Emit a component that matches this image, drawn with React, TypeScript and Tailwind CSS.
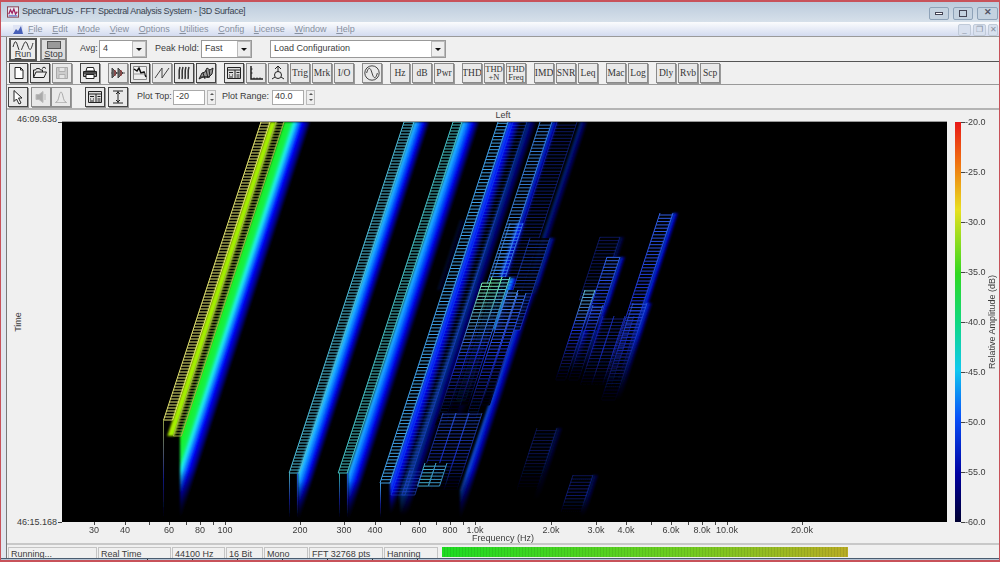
import React from "react";

// every chart coordinate below is in page pixels; the svg viewBox starts where the plot starts
const PLOT_TOP = 122;
const PLOT_BOTTOM = 522;

type Stop = [number, string];

const PALETTES: Record<string, Stop[]> = {
  hot: [
    [0, "#1ef01e"],
    [0.28, "#10f050"],
    [0.4, "#20f0f0"],
    [0.52, "#1090ff"],
    [0.68, "#0000ff"],
    [0.87, "#00007c"],
    [1, "#000000"],
  ],
  cyan: [
    [0, "#30d0ff"],
    [0.3, "#0878ff"],
    [0.6, "#0000f0"],
    [1, "#000000"],
  ],
  blue: [
    [0, "#1060ff"],
    [0.45, "#0000f0"],
    [1, "#000000"],
  ],
  lime: [
    [0, "#b4ec00"],
    [1, "#90f000"],
  ],
};

type Strip = {
  x: number;
  w: number;
  top: number;
  bottom: number;
  pal: string;
  op?: number;
  fade?: number;
  frontX?: number;
  frontY?: number;
};

type Ladder = {
  x: number;
  w: number;
  top: number;
  bottom: number;
  color: string;
  op?: number;
  fade?: number;
  step?: number;
  solid?: boolean;
};

const SLOPE = 0.327;

const strips: Strip[] = [
  // low frequency fundamental
  { x: 270, w: 7, top: PLOT_TOP, bottom: 436, pal: "lime" },
  { x: 284, w: 27, top: PLOT_TOP, bottom: PLOT_BOTTOM, pal: "hot", frontX: 180, frontY: 436, fade: 470 },
  // 200 and 300 Hz
  { x: 414, w: 16, top: PLOT_TOP, bottom: PLOT_BOTTOM, pal: "cyan", frontX: 298, frontY: 473, fade: 480 },
  { x: 462, w: 18, top: PLOT_TOP, bottom: PLOT_BOTTOM, pal: "cyan", frontX: 348, frontY: 473, fade: 480 },
  // cluster at 500-800 Hz
  { x: 508, w: 13, top: PLOT_TOP, bottom: 515, pal: "blue", frontX: 390, frontY: 483, fade: 490 },
  { x: 527, w: 10, top: PLOT_TOP, bottom: 515, pal: "blue", op: 0.5, frontX: 400, frontY: 495, fade: 490 },
  { x: 552, w: 7, top: PLOT_TOP, bottom: 240, pal: "blue", op: 0.8 },
  { x: 580, w: 8, top: PLOT_TOP, bottom: 300, pal: "blue", op: 0.45, fade: 250 },
  { x: 550, w: 6, top: 238, bottom: 310, pal: "blue", op: 0.6, fade: 280 },
  { x: 505, w: 10, top: 260, bottom: 430, pal: "blue", op: 0.35, fade: 380 },
  // centre peak
  { x: 517, w: 10, top: 223, bottom: 300, pal: "blue", op: 0.8, fade: 270 },
  { x: 510, w: 8, top: 278, bottom: 330, pal: "cyan" },
  { x: 526, w: 10, top: 293, bottom: 520, pal: "blue", op: 0.8, frontX: 460, frontY: 490, fade: 470 },
  // right group
  { x: 673, w: 6, top: 213, bottom: 380, pal: "blue", fade: 300, op: 0.85 },
  { x: 620, w: 6, top: 257, bottom: 330, pal: "blue", op: 0.75, fade: 300 },
  { x: 620, w: 5, top: 237, bottom: 290, pal: "blue", op: 0.3 },
  { x: 595, w: 8, top: 290, bottom: 370, pal: "blue", op: 0.8, fade: 320 },
  { x: 603, w: 6, top: 305, bottom: 370, pal: "blue", op: 0.6, fade: 330 },
  { x: 647, w: 6, top: 303, bottom: 400, pal: "blue", op: 0.7, fade: 330 },
  // faint bits near the bottom
  { x: 557, w: 6, top: 428, bottom: 500, pal: "blue", op: 0.25, fade: 450 },
  { x: 593, w: 6, top: 475, bottom: 516, pal: "blue", op: 0.3, fade: 495 },
  { x: 460, w: 6, top: 220, bottom: 290, pal: "blue", op: 0.15 },
];

// painted in order, so later (nearer) ladders hide what runs behind them
const ladders: Ladder[] = [
  { x: 261, w: 9, top: PLOT_TOP, bottom: 420, color: "#e4e470", step: 3 },
  { x: 276, w: 8, top: PLOT_TOP, bottom: 436, color: "#a0ac44", step: 3 },
  { x: 404, w: 10, top: PLOT_TOP, bottom: 473, color: "#4cbcd8", step: 3 },
  { x: 453, w: 9, top: PLOT_TOP, bottom: 473, color: "#44c0c4", step: 3 },
  { x: 498, w: 10, top: PLOT_TOP, bottom: 483, color: "#3f9ee4" },
  { x: 490, w: 9, top: 298, bottom: 400, color: "#2c68d8", op: 0.7 },
  { x: 513, w: 14, top: PLOT_TOP, bottom: 495, color: "#1c4ce0", op: 0.45 },
  { x: 540, w: 12, top: PLOT_TOP, bottom: 300, color: "#3c8cf0", op: 0.85 },
  { x: 557, w: 20, top: PLOT_TOP, bottom: 300, color: "#1630c0", op: 0.5 },
  { x: 530, w: 20, top: 238, bottom: 330, color: "#1e48d8", op: 0.6, solid: true },
  { x: 510, w: 13, top: 223, bottom: 300, color: "#3c8cf0", op: 0.8 },
  // centre peak columns
  { x: 482, w: 10, top: 283, bottom: 425, color: "#80f0b0", fade: 360, solid: true },
  { x: 518, w: 8, top: 293, bottom: 405, color: "#3468e0", fade: 350, solid: true },
  { x: 508, w: 10, top: 290, bottom: 425, color: "#5090e8", fade: 360, solid: true },
  { x: 502, w: 8, top: 277, bottom: 405, color: "#60d8c8", fade: 350, solid: true },
  { x: 492, w: 10, top: 277, bottom: 415, color: "#70f0a0", fade: 350, solid: true },
  // lower steps of the cluster
  { x: 443, w: 13, top: 413, bottom: 490, color: "#2a58e0", op: 0.65, fade: 460 },
  { x: 456, w: 13, top: 413, bottom: 490, color: "#2a58e0", op: 0.65, fade: 460 },
  { x: 469, w: 13, top: 413, bottom: 490, color: "#2a58e0", op: 0.65, fade: 460 },
  { x: 425, w: 11, top: 463, bottom: 486, color: "#40a8c8", solid: true },
  { x: 436, w: 11, top: 463, bottom: 486, color: "#3890c0", solid: true },
  { x: 410, w: 13, top: 470, bottom: 495, color: "#1c44c8", op: 0.6 },
  // right group
  { x: 660, w: 13, top: 213, bottom: 380, color: "#3060e8", fade: 305 },
  { x: 600, w: 20, top: 237, bottom: 300, color: "#1428a8", op: 0.5 },
  { x: 607, w: 13, top: 257, bottom: 330, color: "#3060e0", fade: 310, solid: true },
  { x: 603, w: 11, top: 316, bottom: 385, color: "#1830b8", op: 0.6, fade: 350 },
  { x: 614, w: 11, top: 316, bottom: 385, color: "#1830b8", op: 0.6, fade: 350 },
  { x: 625, w: 9, top: 316, bottom: 385, color: "#1830b8", op: 0.6, fade: 350 },
  { x: 633, w: 14, top: 303, bottom: 400, color: "#2c58d8", fade: 340, op: 0.85 },
  { x: 593, w: 10, top: 305, bottom: 380, color: "#3468d8", fade: 330, op: 0.85 },
  { x: 585, w: 10, top: 290, bottom: 380, color: "#60b8d0", fade: 330, solid: true },
  { x: 537, w: 20, top: 428, bottom: 490, color: "#1428a0", op: 0.4, fade: 450 },
  { x: 573, w: 20, top: 475, bottom: 512, color: "#1428a0", op: 0.5, fade: 495 },
];

// vertical edges of the front faces, fading out towards the bottom of the plot
const fronts: [number, number, string][] = [
  [163, 420, "#8e9c44"],
  [289, 473, "#44a8b8"],
  [297, 473, "#2060d0"],
  [339, 473, "#30b0a8"],
  [347, 473, "#2060d0"],
  [380, 483, "#3f9ee4"],
];

function StripShape({ s, i }: { s: Strip; i: number }) {
  const h = s.bottom - s.top;
  const right = s.x + s.w;
  const pts = [
    [s.x, s.top],
    [right, s.top],
    [right - SLOPE * h, s.bottom],
  ];
  if (s.frontX !== undefined && s.frontY !== undefined) {
    pts.push([s.frontX, s.bottom], [s.frontX, s.frontY]);
  } else {
    pts.push([s.x - SLOPE * h, s.bottom]);
  }
  return (
    <g>
      <linearGradient
        id={`sg${i}`}
        gradientUnits="userSpaceOnUse"
        x1={0}
        y1={0}
        x2={s.w}
        y2={0}
        gradientTransform={`matrix(1 0 ${-SLOPE} 1 ${s.x} ${s.top})`}
      >
        {PALETTES[s.pal].map(([o, c]) => (
          <stop key={o} offset={o} stopColor={c} />
        ))}
      </linearGradient>
      {s.fade !== undefined && (
        <linearGradient id={`sf${i}`} gradientUnits="userSpaceOnUse" x1={0} y1={s.fade} x2={0} y2={s.bottom}>
          <stop offset={0} stopColor="#fff" />
          <stop offset={1} stopColor="#000" />
        </linearGradient>
      )}
      {s.fade !== undefined && (
        <mask id={`sm${i}`} maskUnits="userSpaceOnUse" x={62} y={122} width={885} height={400}>
          <rect x={62} y={122} width={885} height={400} fill={`url(#sf${i})`} />
        </mask>
      )}
      <polygon
        points={pts.map((p) => p.join(",")).join(" ")}
        fill={`url(#sg${i})`}
        opacity={s.op ?? 1}
        mask={s.fade !== undefined ? `url(#sm${i})` : undefined}
      />
    </g>
  );
}

function LadderShape({ l, i }: { l: Ladder; i: number }) {
  const step = l.step ?? 3.3;
  let d = "";
  for (let y = l.bottom; y >= l.top; y -= step) {
    const x = l.x - SLOPE * (y - l.top);
    d += `M${x.toFixed(1)} ${y.toFixed(1)}h${l.w}`;
  }
  const dy = l.bottom - l.top;
  const shift = SLOPE * dy;
  d += `M${l.x} ${l.top}L${(l.x - shift).toFixed(1)} ${l.bottom}`;
  d += `M${l.x + l.w} ${l.top}L${(l.x + l.w - shift).toFixed(1)} ${l.bottom}`;
  const fadeAt = l.fade !== undefined ? (l.fade - l.top) / dy : 1;
  return (
    <g>
      <linearGradient id={`lg${i}`} gradientUnits="userSpaceOnUse" x1={0} y1={l.top} x2={0} y2={l.bottom}>
        <stop offset={0} stopColor={l.color} />
        <stop offset={fadeAt} stopColor={l.fade !== undefined ? "#1a30d0" : l.color} />
        {l.fade !== undefined && <stop offset={1} stopColor="#000010" />}
      </linearGradient>
      {l.solid && (
        <polygon
          points={`${l.x},${l.top} ${l.x + l.w},${l.top} ${l.x + l.w - shift},${l.bottom} ${l.x - shift},${l.bottom}`}
          fill="#000"
          opacity={0.8}
        />
      )}
      <path d={d} fill="none" stroke={`url(#lg${i})`} strokeWidth={1} opacity={l.op ?? 1} />
    </g>
  );
}

const xTicks: [number, string][] = [
  [94, "30"],
  [125, "40"],
  [149, ""],
  [169, "60"],
  [186, ""],
  [200, "80"],
  [213, ""],
  [225, "100"],
  [300, "200"],
  [344, "300"],
  [375, "400"],
  [400, ""],
  [419, "600"],
  [436, ""],
  [450, "800"],
  [463, ""],
  [475, "1.0k"],
  [551, "2.0k"],
  [596, "3.0k"],
  [626, "4.0k"],
  [651, ""],
  [671, "6.0k"],
  [688, ""],
  [702, "8.0k"],
  [715, ""],
  [727, "10.0k"],
  [802, "20.0k"],
];

const dbTicks: [number, string][] = [
  [122, "-20.0"],
  [172, "-25.0"],
  [222, "-30.0"],
  [272, "-35.0"],
  [322, "-40.0"],
  [372, "-45.0"],
  [422, "-50.0"],
  [472, "-55.0"],
  [522, "-60.0"],
];

function Plot() {
  return (
    <svg
      viewBox="7 110 993 433"
      className="block h-[433px] w-[993px] shrink-0 bg-[#f0f0f0] text-[9px] fill-[#3c3c3c]"
    >
      <defs>
        <linearGradient id="scale" x1={0} y1={0} x2={0} y2={1}>
          <stop offset={0} stopColor="#e81818" />
          <stop offset={0.1} stopColor="#f07010" />
          <stop offset={0.22} stopColor="#e8e020" />
          <stop offset={0.38} stopColor="#30d820" />
          <stop offset={0.5} stopColor="#10d880" />
          <stop offset={0.62} stopColor="#10c8f0" />
          <stop offset={0.74} stopColor="#0850f8" />
          <stop offset={0.88} stopColor="#0000a0" />
          <stop offset={1} stopColor="#000030" />
        </linearGradient>
        <filter id="glow" filterUnits="userSpaceOnUse" x={62} y={122} width={885} height={400}>
          <feGaussianBlur stdDeviation={0.9} />
        </filter>
        <filter id="soft" filterUnits="userSpaceOnUse" x={62} y={122} width={885} height={400}>
          <feGaussianBlur stdDeviation={0.4} />
        </filter>
        <clipPath id="plot-clip">
          <rect x={62} y={PLOT_TOP} width={885} height={400} />
        </clipPath>
      </defs>

      <text x={503} y={118} textAnchor="middle">Left</text>
      <line x1={62} x2={947} y1={121.5} y2={121.5} stroke="#999" />
      <rect x={62} y={PLOT_TOP} width={885} height={400} fill="#000" />

      <g clipPath="url(#plot-clip)">
        <g filter="url(#glow)">
          {strips.map((s, i) => (
            <StripShape key={i} s={s} i={i} />
          ))}
        </g>
        <g filter="url(#soft)">
          {ladders.map((l, i) => (
            <LadderShape key={i} l={l} i={i} />
          ))}
          {fronts.map(([x, y, c], i) => (
            <g key={i}>
              <linearGradient id={`fg${i}`} gradientUnits="userSpaceOnUse" x1={0} y1={y} x2={0} y2={518}>
                <stop offset={0} stopColor={c} />
                <stop offset={0.6} stopColor="#101880" />
                <stop offset={1} stopColor="#000" />
              </linearGradient>
              <rect x={x} y={y} width={1} height={518 - y} fill={`url(#fg${i})`} />
            </g>
          ))}
        </g>
      </g>

      {/* time axis */}
      <line x1={58} x2={62} y1={122.5} y2={122.5} stroke="#444" />
      <line x1={58} x2={62} y1={522.5} y2={522.5} stroke="#444" />
      <text x={57} y={122} textAnchor="end">46:09.638</text>
      <text x={57} y={525} textAnchor="end">46:15.168</text>
      <text transform="translate(21 322) rotate(-90)" textAnchor="middle">Time</text>

      {/* frequency axis */}
      {xTicks.map(([x, label]) => (
        <g key={x}>
          <line x1={x + 0.5} x2={x + 0.5} y1={522} y2={525} stroke="#444" />
          {label && (
            <text x={x} y={533} textAnchor="middle">{label}</text>
          )}
        </g>
      ))}
      <text x={503} y={541} textAnchor="middle">Frequency (Hz)</text>

      {/* colour scale */}
      <rect x={955} y={PLOT_TOP} width={6} height={400} fill="url(#scale)" />
      {dbTicks.map(([y, label]) => (
        <g key={y}>
          <line x1={961} x2={965} y1={y + 0.5} y2={y + 0.5} stroke="#444" />
          <text x={965} y={y + 3}>{label}</text>
        </g>
      ))}
      <text transform="translate(995 322) rotate(-90)" textAnchor="middle">Relative Amplitude (dB)</text>
    </svg>
  );
}

const menus = ["File", "Edit", "Mode", "View", "Options", "Utilities", "Config", "License", "Window", "Help"];

function Ic({ children }: { children: React.ReactNode }) {
  return (
    <svg viewBox="0 0 16 16" className="h-4 w-4" fill="none" stroke="#222" strokeWidth={1}>
      {children}
    </svg>
  );
}

const icons = {
  page: (
    <Ic>
      <path d="M4 2.5h5.5l2.5 2.5v8.5H4z" fill="#fff" />
      <path d="M9.5 2.5V5H12" />
    </Ic>
  ),
  open: (
    <Ic>
      <path d="M1.5 12.5V5h2l1-1.5h3l1 1.5h2v2" fill="#ddd" />
      <path d="M1.5 12.5l2.5-5.5h10.5l-2.5 5.5z" fill="#eee" />
      <path d="M10 3.5l2-1.5 2 1.5" />
    </Ic>
  ),
  save: (
    <Ic>
      <path d="M2.5 2.5h11v11h-11z" fill="#ccc" stroke="#aaa" />
      <path d="M5 2.5h6v4H5zM5 9.5h6v4H5z" fill="#e4e4e4" stroke="#b0b0b0" />
    </Ic>
  ),
  print: (
    <Ic>
      <path d="M5 2.5h6.5l1 3.5H4z" fill="#fff" />
      <path d="M1.5 6.5h13v5h-13z" fill="#999" />
      <path d="M4 9.5h8v4H4z" fill="#fff" />
      <path d="M2 8h12" stroke="#333" strokeWidth={1.5} />
    </Ic>
  ),
  peaks: (
    <Ic>
      <path d="M1 8h14" stroke="#555" />
      <path d="M2 3l5 5-5 5zM8 3l5 5-5 5z" fill="#666" stroke="#444" />
      <path d="M5 5v6M11 5v6" stroke="#a33" />
    </Ic>
  ),
  graph: (
    <Ic>
      <path d="M1.5 1.5h13v13h-13z" fill="#eee" stroke="#888" />
      <path d="M2 4l3 2 2-3 2 5 3-1 2 5" stroke="#111" strokeWidth={1.5} />
      <path d="M1.5 9h13" stroke="#999" />
    </Ic>
  ),
  saw: (
    <Ic>
      <path d="M1 13l7-10v10l7-10" stroke="#444" />
    </Ic>
  ),
  fall: (
    <Ic>
      <path d="M3 14c1-4-1-7 1-12M6 14c1-4-1-7 1-12M9 14c1-4-1-7 1-12M12 14c1-4-1-7 1-12" stroke="#333" strokeWidth={1.5} />
    </Ic>
  ),
  surface: (
    <Ic>
      <path d="M1 14l3-6 3-1 2-4 3 2 3-2-1 6-3 3H5z" fill="#999" stroke="#222" />
      <path d="M5 8l2 6M8 5l2 8M11 5l1 6M2 12h10" stroke="#222" />
    </Ic>
  ),
  windows: (
    <Ic>
      <path d="M1.5 2.5h13v11h-13z" fill="#ddd" />
      <path d="M1.5 5h13M9 5v8.5" />
      <path d="M3 7.5h4M3 10h1M6 10h1M3 12h4M10.5 7.5h3M10.5 10h3M10.5 12h3" />
    </Ic>
  ),
  axis: (
    <Ic>
      <path d="M3 1v13h12" strokeWidth={1.5} />
      <path d="M6 12.5v1.5M9 12.5v1.5M12 12.5v1.5M3 4h1.5M3 8h1.5" />
    </Ic>
  ),
  scope: (
    <Ic>
      <path d="M8 1v6M5 4l3-3 3 3" />
      <circle cx={8} cy={10} r={3.5} />
      <path d="M2 14l3-2M14 14l-3-2" />
    </Ic>
  ),
  sine: (
    <svg viewBox="0 0 20 20" className="h-[18px] w-[18px]" fill="none" stroke="#333">
      <circle cx={10} cy={10} r={8} />
      <path d="M4 10c2-7 4-7 6 0s4 7 6 0" />
    </svg>
  ),
  arrow: (
    <Ic>
      <path d="M4 1.5v11l2.5-2.5 2.5 5 2-1-2.5-5H12z" fill="#fff" />
    </Ic>
  ),
  speaker: (
    <Ic>
      <path d="M3 5.5h3l4-3v11l-4-3H3z" fill="#aaa" stroke="#bbb" />
      <path d="M12 5v6" stroke="#bbb" />
    </Ic>
  ),
  bump: (
    <Ic>
      <path d="M2 13.5h12" stroke="#bbb" />
      <path d="M3 13c3 0 3-10 5-10s2 10 5 10" stroke="#aaa" />
    </Ic>
  ),
  ibeam: (
    <Ic>
      <path d="M3 2h10M3 14h10M8 2v12" />
      <path d="M6 5l2-2 2 2M6 11l2 2 2-2" />
    </Ic>
  ),
};

type ToolProps = {
  gap?: boolean;
  pressed?: boolean;
  wide?: string;
  children: React.ReactNode;
};

function Tool({ gap, pressed, wide, children }: ToolProps) {
  return (
    <div
      className={`flex items-center justify-center overflow-hidden border bg-[#e9e9e9] [font-family:'Liberation_Serif',serif] text-[9.5px] text-[#333] shadow-[1px_1px_0_#999] ${
        wide ?? "w-5"
      } ${pressed ? "border-[#444] bg-[#dcdcdc]" : "border-[#8a8a8a]"} ${gap ? "ml-[6px]" : ""}`}
    >
      {children}
    </div>
  );
}

function Stacked({ a, b }: { a: string; b: string }) {
  return (
    <div className="flex flex-col items-center text-[8.5px] leading-[8px]">
      <span>{a}</span>
      <span>{b}</span>
    </div>
  );
}

function Dropdown({ value, className }: { value: string; className: string }) {
  return (
    <div className={`flex h-[18px] items-center justify-between border border-[#999] bg-white pl-[3px] ${className}`}>
      <span>{value}</span>
      <div className="flex h-4 w-[14px] items-center justify-center border border-[#bbb] bg-[#eee]">
        <div className="h-0 w-0 border-x-[3px] border-t-[3px] border-x-transparent border-t-[#111]" />
      </div>
    </div>
  );
}

function Spin({ value, className }: { value: string; className: string }) {
  return (
    <div className="flex items-center gap-[2px]">
      <div className={`flex h-[15px] items-center border border-[#aaa] bg-white pl-[2px] ${className}`}>{value}</div>
      <div className="flex h-[15px] w-[9px] flex-col items-center justify-around border border-[#bbb] bg-[#eee]">
        <div className="h-0 w-0 border-x-[2px] border-b-[2px] border-x-transparent border-b-[#555]" />
        <div className="h-0 w-0 border-x-[2px] border-t-[2px] border-x-transparent border-t-[#555]" />
      </div>
    </div>
  );
}

function WinButton({ className, children }: { className: string; children: React.ReactNode }) {
  return (
    <div className={`flex items-center justify-center rounded-[2px] border border-[#8ea2b8] bg-[#c4d2e0] ${className}`}>
      {children}
    </div>
  );
}

const statusCells: [string, string][] = [
  ["Running...", "w-[89px]"],
  ["Real Time", "w-[73px]"],
  ["44100 Hz", "w-[53px]"],
  ["16 Bit", "w-[37px]"],
  ["Mono", "w-[44px]"],
  ["FFT 32768 pts", "w-[74px]"],
  ["Hanning", "w-[54px]"],
];

const notches = [0, 1, 2, 3, 4, 5, 6];

export default function App() {
  return (
    <div className="relative flex h-[562px] w-[1000px] flex-col overflow-hidden border-x border-t-2 border-x-[#c8525a] border-t-[#c8525a] bg-[#f0f0f0] [font-family:'Liberation_Sans',sans-serif] text-[9px] text-[#3c3c3c]">
      {/* title bar */}
      <div className="flex h-[20px] shrink-0 items-center justify-between bg-[linear-gradient(#bccbdc,#d6e0ea)] pl-[6px] pr-[1px]">
        <div className="flex items-center gap-[3px]">
          <svg viewBox="0 0 14 13" className="h-[12px] w-[12px]">
            <rect x={0.5} y={0.5} width={13} height={12} fill="#e8e8f0" stroke="#803040" />
            <path d="M2 9l2-5 2 4 2-5 2 6 2-3" fill="none" stroke="#a02060" strokeWidth={1.5} />
            <path d="M2 11h10" stroke="#3050c0" />
          </svg>
          <span className="text-[9px] tracking-[-0.3px] text-[#39424e]">
            SpectraPLUS - FFT Spectral Analysis System - [3D Surface]
          </span>
        </div>
        <div className="mt-[2px] flex items-center gap-1">
          <WinButton className="h-[13px] w-[20px]">
            <div className="h-[3px] w-[8px] border border-[#445] bg-white" />
          </WinButton>
          <WinButton className="h-[13px] w-[20px]">
            <div className="h-[7px] w-[8px] border border-[#445]" />
          </WinButton>
          <WinButton className="h-[13px] w-[21px] text-[9px] font-bold text-[#556]">✕</WinButton>
        </div>
      </div>

      {/* menu bar */}
      <div className="flex h-[14px] shrink-0 items-center justify-between bg-[linear-gradient(#fbfcfd,#d3dbf0)] pl-[11px] pr-[1px] pt-[1px] text-[#87909f]">
        <div className="flex items-center gap-[4px]">
          <svg viewBox="0 0 12 12" className="h-3 w-3">
            <rect x={1} y={1} width={10} height={10} fill="#dfe4f4" />
            <path d="M1 10l3-5 2 2 3-5 2 8z" fill="#4860b8" />
          </svg>
          <div className="flex items-center gap-[9.7px]">
            {menus.map((m) => (
              <span key={m}>
                <span className="underline">{m[0]}</span>
                {m.slice(1)}
              </span>
            ))}
          </div>
        </div>
        <div className="flex h-full items-center gap-[2px]">
          <WinButton className="h-[12px] w-[13px] border-[#c0cad8] bg-[#d8e0ee] text-[8px] leading-none">_</WinButton>
          <WinButton className="h-[12px] w-[13px] border-[#c0cad8] bg-[#d8e0ee] text-[8px] leading-none">❐</WinButton>
          <WinButton className="h-[12px] w-[10px] border-[#c0cad8] bg-[#d8e0ee] text-[8px] leading-none">✕</WinButton>
        </div>
      </div>

      <div className="flex min-h-0 flex-1 border-t border-t-[#9a9a9a]">
        <div className="w-[6px] shrink-0 border-r border-r-[#777] bg-[#e0e6ee]" />
        <div className="flex min-w-0 flex-1 flex-col">
          {/* run, stop and combo row */}
          <div className="flex h-[25px] shrink-0 items-center border-b border-b-[#555] pl-[2px]">
            <div className="flex h-[23px] w-[28px] flex-col items-center border-2 border-[#555] bg-[#ececec] leading-[8px]">
              <svg viewBox="0 0 22 10" className="h-[10px] w-[22px]" fill="none" stroke="#333">
                <path d="M1 7c2-7 3-7 5 0s3 4 5-1 3-6 5 0 3 4 5-3" />
              </svg>
              <span>
                <span className="underline">R</span>un
              </span>
            </div>
            <div className="ml-[3px] flex h-[23px] w-[27px] flex-col items-center border-2 border-[#888] bg-[#dedede] leading-[8px]">
              <div className="mt-[1px] h-[8px] w-[14px] border border-[#555] bg-[#999]" />
              <span className="mt-[1px]">
                <span className="underline">S</span>top
              </span>
            </div>
            <span className="ml-[13px] w-[19px]">Avg:</span>
            <Dropdown value="4" className="w-[48px]" />
            <span className="ml-[8px] w-[46px]">Peak Hold:</span>
            <Dropdown value="Fast" className="w-[51px]" />
            <Dropdown value="Load Configuration" className="ml-[18px] w-[176px]" />
          </div>

          {/* main toolbar */}
          <div className="flex h-[23px] shrink-0 items-stretch gap-[2px] border-b border-b-[#999] py-[1px] pl-[2px]">
            <Tool wide="w-[19px]" pressed>{icons.page}</Tool>
            <Tool pressed>{icons.open}</Tool>
            <Tool>{icons.save}</Tool>
            <Tool gap pressed>{icons.print}</Tool>
            <Tool gap>{icons.peaks}</Tool>
            <Tool pressed>{icons.graph}</Tool>
            <Tool>{icons.saw}</Tool>
            <Tool pressed>{icons.fall}</Tool>
            <Tool pressed>{icons.surface}</Tool>
            <Tool gap pressed>{icons.windows}</Tool>
            <Tool>{icons.axis}</Tool>
            <Tool>{icons.scope}</Tool>
            <Tool>Trig</Tool>
            <Tool>Mrk</Tool>
            <Tool>I/O</Tool>
            <Tool gap>{icons.sine}</Tool>
            <Tool gap>Hz</Tool>
            <Tool>dB</Tool>
            <Tool>Pwr</Tool>
            <Tool gap>THD</Tool>
            <Tool><Stacked a="THD" b="+N" /></Tool>
            <Tool><Stacked a="THD" b="Freq" /></Tool>
            <Tool gap>IMD</Tool>
            <Tool>SNR</Tool>
            <Tool>Leq</Tool>
            <Tool gap>Mac</Tool>
            <Tool>Log</Tool>
            <Tool gap>Dly</Tool>
            <Tool>Rvb</Tool>
            <Tool>Scp</Tool>
          </div>

          {/* plot toolbar */}
          <div className="flex h-[25px] shrink-0 items-stretch border-b-2 border-b-[#b4b4b4] pb-[1px] pt-[2px] pl-[1px]">
            <Tool wide="w-[20px]" pressed>{icons.arrow}</Tool>
            <div className="ml-[3px] flex">
              <Tool>{icons.speaker}</Tool>
              <Tool>{icons.bump}</Tool>
            </div>
            <div className="ml-[14px] flex gap-[3px]">
              <Tool pressed>{icons.windows}</Tool>
              <Tool pressed>{icons.ibeam}</Tool>
            </div>
            <div className="ml-[9px] flex items-center">
              <span className="w-[36px]">Plot Top:</span>
              <Spin value="-20" className="w-[32px]" />
              <span className="ml-[6px] w-[50px]">Plot Range:</span>
              <Spin value="40.0" className="w-[32px]" />
            </div>
          </div>

          <Plot />

          {/* status bar */}
          <div className="flex h-[16px] shrink-0 items-start gap-[1px] border-t-2 border-t-[#c8c8c8] pl-[1px] pt-[2px]">
            {statusCells.map(([label, w]) => (
              <div key={label} className={`h-[14px] shrink-0 border border-[#c4c4c4] pl-[2px] leading-[12px] ${w}`}>
                {label}
              </div>
            ))}
            <div className="ml-[3px] h-[10px] w-[406px] bg-[repeating-linear-gradient(90deg,transparent_0,transparent_2px,rgba(0,0,0,0.08)_2px,rgba(0,0,0,0.08)_3px),linear-gradient(90deg,#1fdc22,#70cc20_60%,#b8ac24)]" />
          </div>
        </div>
      </div>

      {/* the taskbar edge of the desktop shows through along the bottom */}
      <div className="absolute inset-x-0 bottom-0 flex h-[4px] gap-[44px] border-t border-t-[#4a5c70] border-b-2 border-b-[#c8525a] bg-[#b4c4d4] pl-[146px]">
        {notches.map((n) => (
          <div key={n} className="h-full w-[1px] bg-[#333]" />
        ))}
      </div>
    </div>
  );
}
